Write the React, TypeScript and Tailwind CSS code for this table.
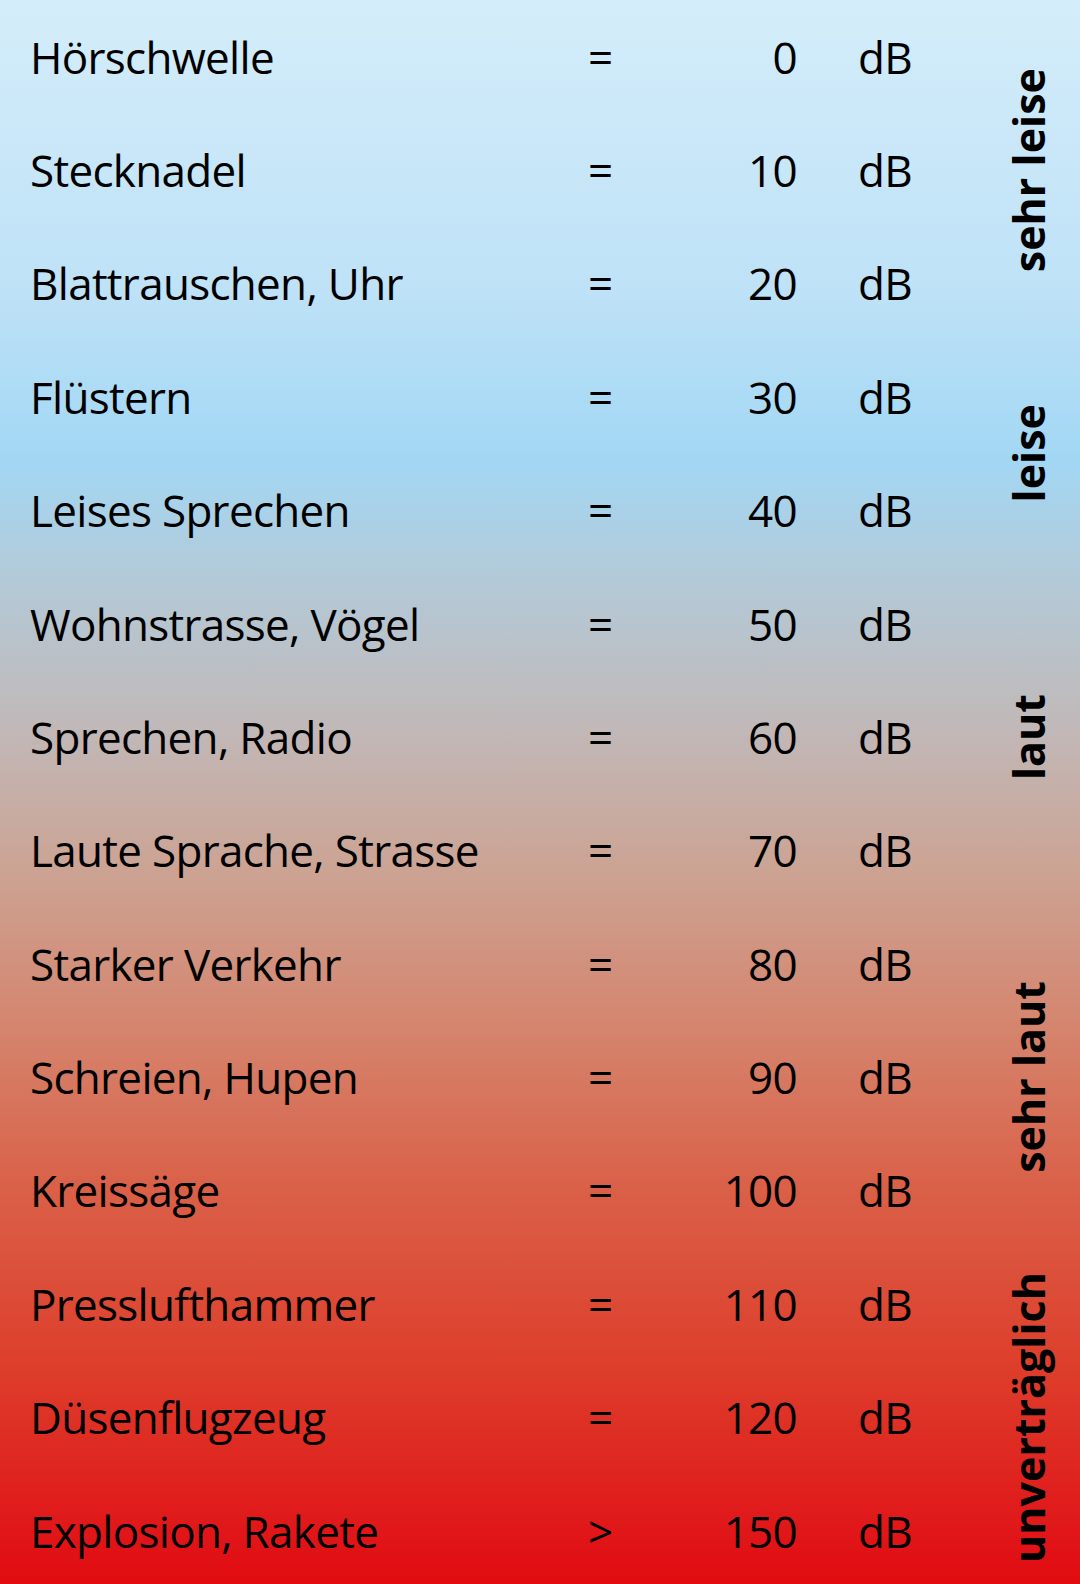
const rows = [
  { name: "Hörschwelle", op: "=", value: "0" },
  { name: "Stecknadel", op: "=", value: "10" },
  { name: "Blattrauschen, Uhr", op: "=", value: "20" },
  { name: "Flüstern", op: "=", value: "30" },
  { name: "Leises Sprechen", op: "=", value: "40" },
  { name: "Wohnstrasse, Vögel", op: "=", value: "50" },
  { name: "Sprechen, Radio", op: "=", value: "60" },
  { name: "Laute Sprache, Strasse", op: "=", value: "70" },
  { name: "Starker Verkehr", op: "=", value: "80" },
  { name: "Schreien, Hupen", op: "=", value: "90" },
  { name: "Kreissäge", op: "=", value: "100" },
  { name: "Presslufthammer", op: "=", value: "110" },
  { name: "Düsenflugzeug", op: "=", value: "120" },
  { name: "Explosion, Rakete", op: ">", value: "150" },
];

// label groups span a number of rows
const groups = [
  { label: "sehr leise", span: 3 },
  { label: "leise", span: 2 },
  { label: "laut", span: 3 },
  { label: "sehr laut", span: 3 },
  { label: "unverträglich", span: 3 },
];

const ROW = 113.38;

export default function App() {
  return (
    <div
      className="w-[1080px] h-[1584px] flex text-black overflow-hidden"
      style={{
        fontFamily: '"Open Sans", "Noto Sans", sans-serif',
        background:
          "linear-gradient(to bottom, #d4edfa 0%, #bfe2f7 18%, #a2d7f4 29%, #b4c9d6 37%, #c1b8b8 46%, #cca393 55%, #d5846d 65%, #da6048 75%, #dd3f2c 86%, #e0191a 96%, #e10b10 100%)",
      }}
    >
      {/* Table rows */}
      <div className="flex flex-col w-[960px] shrink-0">
        {rows.map((r) => (
          <div
            key={r.name}
            className="flex items-center shrink-0 pl-[30px] text-[44px] tracking-[-0.7px] leading-none"
            style={{ height: ROW }}
          >
            <span className="w-[558px] whitespace-nowrap">{r.name}</span>
            <span className="w-[60px]">{r.op}</span>
            <span className="w-[149px] text-right">{r.value}</span>
            <span className="ml-[61px]">dB</span>
          </div>
        ))}
      </div>

      {/* Rotated category labels */}
      <div className="flex flex-col flex-1">
        {groups.map((g) => (
          <div
            key={g.label}
            className="flex items-center justify-center shrink-0 pl-[16px]"
            style={{ height: ROW * g.span }}
          >
            <span className="[writing-mode:vertical-rl] rotate-180 font-bold text-[43px] leading-none whitespace-nowrap">
              {g.label}
            </span>
          </div>
        ))}
      </div>
    </div>
  );
}
